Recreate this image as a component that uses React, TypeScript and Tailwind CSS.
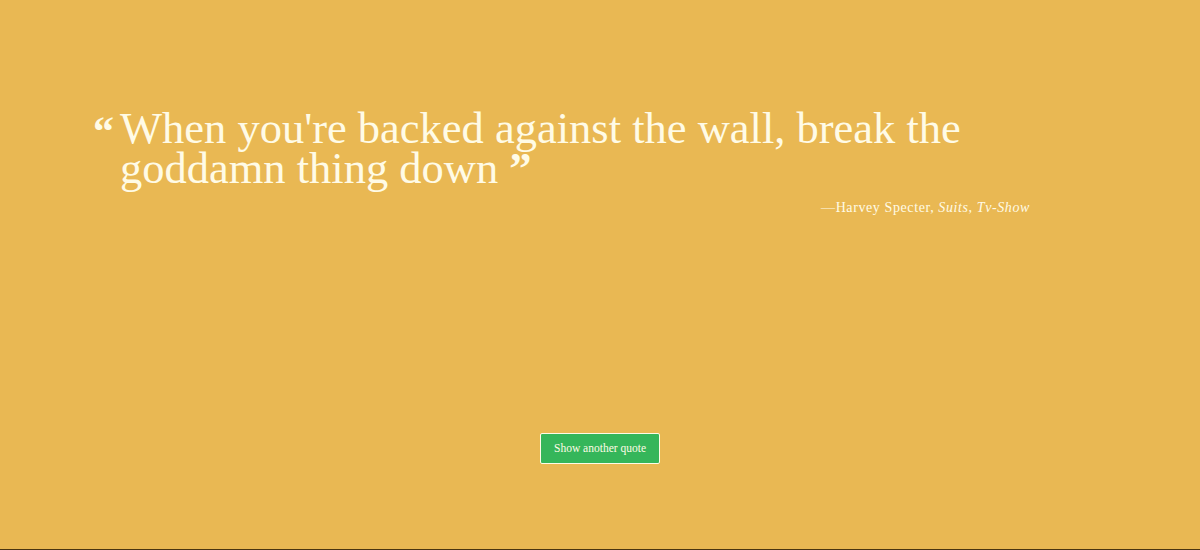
export default function App() {
  return (
    <div className="w-full h-[550px] bg-[#e9b853] border-b border-[#4a3510] flex flex-col font-['Liberation_Serif',serif] text-[#fffbe6]">
      {/* quote */}
      <div className="ml-[93px] w-[937px] mt-[108px] flex flex-col">
        <div className="flex items-start">
          <span className="text-[42px] leading-[40px] w-[27px] mt-[3px] font-bold">&ldquo;</span>
          <p className="text-[44.5px] leading-[40px] w-[880px]">
            When you're backed against the wall, break the goddamn thing down <b>&rdquo;</b>
          </p>
        </div>
        <p className="self-end mt-[10px] text-[14px] leading-[20px] tracking-[0.6px]">
          &mdash;Harvey Specter, <i>Suits</i>, <i>Tv-Show</i>
        </p>
      </div>
      {/* button */}
      <div className="flex justify-center mt-[215px]">
        <button className="w-[120px] h-[31px] bg-[#35b65a] border border-[#fffbe6] rounded-[2px] text-[11.5px] text-[#fffbe6]">
          Show another quote
        </button>
      </div>
    </div>
  )
}
